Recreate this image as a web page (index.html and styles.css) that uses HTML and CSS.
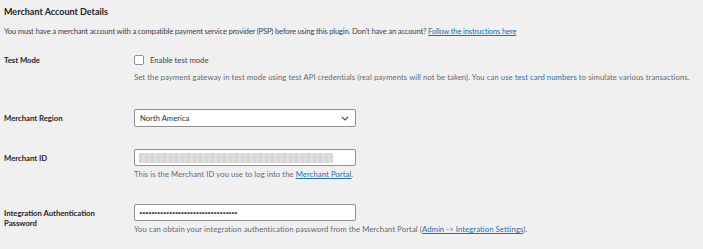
FILE: index.html
```html
<!DOCTYPE html>
<html lang="en">
<head>
  <meta charset="UTF-8" />
  <meta name="viewport" content="width=device-width, initial-scale=1.0"/>
  <title>Merchant Account Details</title>
  <link rel="stylesheet" href="styles.css">
</head>
<body>
  <div class="wrap">
    <h2 class="title">Merchant Account Details</h2>
    <p class="intro">You must have a merchant account with a compatible payment service provider (PSP) before using this plugin. Don't have an account? <a href="#">Follow the instructions here</a></p>

    <div class="form-table">
      <div class="row row-check">
        <div class="label">Test Mode</div>
        <div class="field">
          <label class="check"><span class="box"></span>Enable test mode</label>
          <p class="desc">Set the payment gateway in test mode using test API credentials (real payments will not be taken). You can use <a href="#" class="plain">test card numbers</a> to simulate various transactions.</p>
        </div>
      </div>

      <div class="row row-select">
        <div class="label">Merchant Region</div>
        <div class="field">
          <div class="select">
            <span>North America</span>
            <svg width="8" height="5" viewBox="0 0 8 5"><path d="M1 1l3 3 3-3" fill="none" stroke="#50575e" stroke-width="1.2"/></svg>
          </div>
        </div>
      </div>

      <div class="row row-id">
        <div class="label">Merchant ID</div>
        <div class="field">
          <div class="input"><span class="redacted"></span></div>
          <p class="desc">This is the Merchant ID you use to log into the <a href="#">Merchant Portal</a>.</p>
        </div>
      </div>

      <div class="row">
        <div class="label">Integration Authentication Password</div>
        <div class="field">
          <div class="input"><span class="dots">•••••••••••••••••••••••••••••••••</span></div>
          <p class="desc">You can obtain your integration authentication password from the Merchant Portal (<a href="#">Admin -&gt; Integration Settings</a>).</p>
        </div>
      </div>
    </div>
  </div>
</body>
</html>
```

FILE: styles.css
```css
* {
  box-sizing: border-box;
}

body {
  margin: 0;
  background: #f0f0f1;
  font-family: Lato, "Liberation Sans", Arial, sans-serif;
  font-size: 7.7px;
  color: #3c434a;
}

.wrap {
  padding: 6px 4px 0;
}

a {
  color: #2271b1;
}

a.plain {
  text-decoration: none;
}

.title {
  margin: 0;
  font-size: 9px;
  font-weight: 700;
  line-height: 12px;
  color: #1d2327;
}

.intro {
  margin: 8px 0 0;
  line-height: 10px;
  letter-spacing: -0.2px;
}

.form-table {
  margin-top: 19px;
}

.row {
  display: grid;
  grid-template-columns: 130px 1fr;
}

.row-check {
  margin-bottom: 27px;
}

.row-select {
  margin-bottom: 22px;
}

.row-id {
  margin-bottom: 25px;
}

.label {
  width: 112px;
  padding-top: 4px;
  font-weight: 700;
  line-height: 10px;
  color: #1d2327;
}

.row-check .label {
  padding-top: 0;
}

.check {
  display: flex;
  align-items: center;
  gap: 6px;
  height: 10px;
}

.box {
  width: 10px;
  height: 10px;
  border: 1px solid #8c8f94;
  border-radius: 2px;
  background: #fff;
}

.desc {
  margin: 3px 0 0;
  line-height: 10px;
  color: #646970;
  white-space: nowrap;
  letter-spacing: 0.08px;
}

.row-check .desc {
  margin-top: 7px;
}

.select,
.input {
  width: 222px;
  height: 18px;
  display: flex;
  align-items: center;
  background: #fff;
  border: 1px solid #8c8f94;
  border-radius: 2px;
}

.select {
  justify-content: space-between;
  padding: 0 6px 0 5px;
  color: #2c3338;
}

.input {
  height: 17px;
  padding: 0 4px;
}

.redacted {
  width: 194px;
  height: 10px;
  background: repeating-linear-gradient(90deg, #d6d6d6 0 3px, #dedede 3px 6px);
}

.dots {
  font-size: 6.5px;
  letter-spacing: -0.8px;
  color: #50575e;
}
```
